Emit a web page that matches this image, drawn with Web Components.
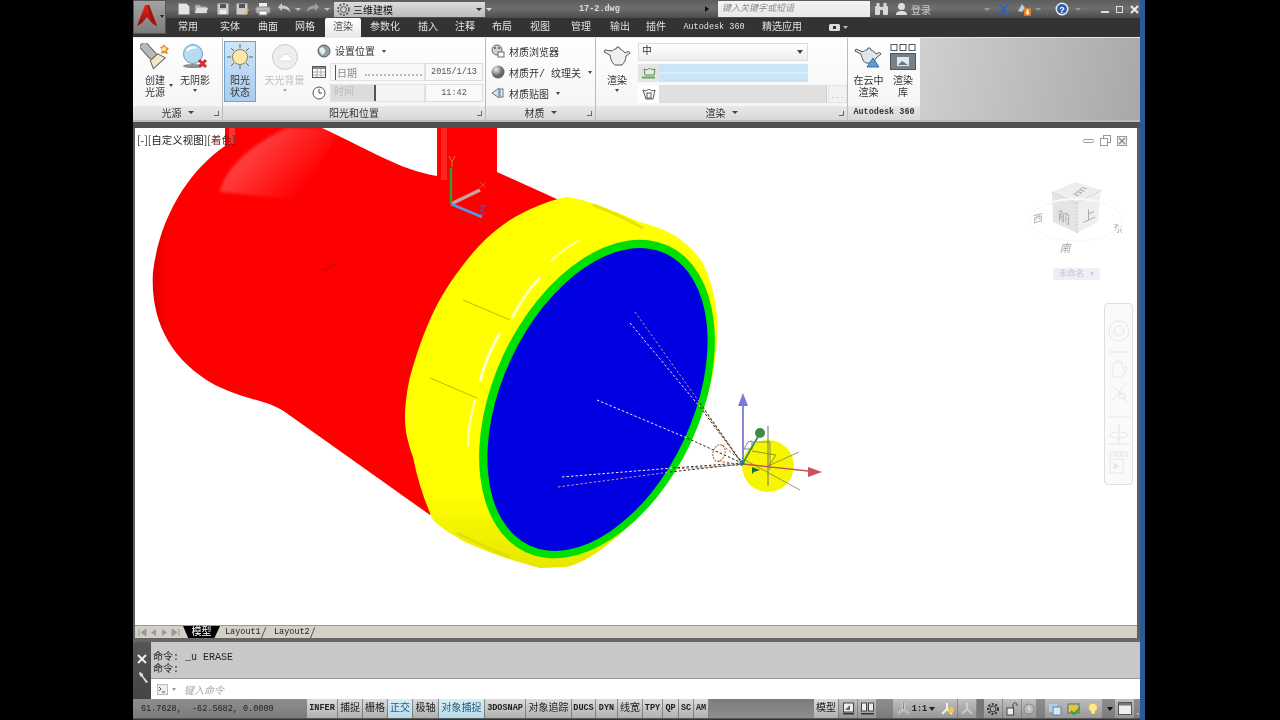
<!DOCTYPE html>
<html lang="zh">
<head>
<meta charset="utf-8">
<title>17-2.dwg</title>
<style>
  html, body { margin: 0; height: 100%; background: #000; overflow: hidden; }
  body { font: 10px "Liberation Mono", "Noto Sans CJK SC", monospace; padding-left: 133px; }
  svg { display: block; }
</style>
</head>
<body>

<cad-app>
  <cad-header slot="header"></cad-header>

  <ribbon-bar slot="ribbon">
    <ribbon-panel heading="光源" style="width:89px" menu>
      <ribbon-big style="width:40px;margin-left:2px" caret-side>
        <svg slot="icon" width="30" height="28" viewBox="0 0 30 28">
          <g transform="rotate(-42 12 12)"><rect x="8" y="-3" width="8" height="18" rx="2" fill="#b9b9b9" stroke="#666"/><path d="M7 15h10l3 8H4z" fill="#efe9c8" stroke="#666"/></g>
          <path d="M24 1l2 3 3 1-2 3 1 3-4-1-3 1 1-4-2-3 3-1z" fill="#e98a2c"/>
          <circle cx="24" cy="6" r="2" fill="#fff1b0"/>
        </svg>
        创建<br>光源
      </ribbon-big>
      <ribbon-big style="width:40px" caret>
        <svg slot="icon" width="30" height="28" viewBox="0 0 30 28">
          <circle cx="13" cy="11" r="9.5" fill="#b7dcf2" stroke="#6d9cc0"/>
          <path d="M7 8a7 6 0 0 1 9-3" stroke="#fff" stroke-width="2" fill="none"/>
          <ellipse cx="13" cy="23" rx="10" ry="2" fill="#8b8f96"/>
          <path d="M19 17l7 7m0-7l-7 7" stroke="#d62c2c" stroke-width="3"/>
        </svg>
        无阴影
      </ribbon-big>
    </ribbon-panel>

    <ribbon-panel heading="阳光和位置" style="width:262px;margin-left:1px">
      <ribbon-big active style="width:32px;margin-left:1px">
        <svg slot="icon" width="30" height="28" viewBox="0 0 30 28">
          <g stroke="#666" stroke-width="1"><path d="M15 1v4M15 22v4M2 14h4M24 14h4M6 5l3 3M24 5l-3 3M6 23l3-3M24 23l-3-3"/></g>
          <circle cx="15" cy="14" r="7.5" fill="#ffe9a6" stroke="#8a8060"/>
        </svg>
        阳光<br>状态
      </ribbon-big>
      <ribbon-big disabled caret style="width:45px;margin-left:6px">
        <svg slot="icon" width="30" height="28" viewBox="0 0 30 28">
          <circle cx="15" cy="14" r="12.5" fill="#eee" stroke="#ccc"/>
          <path d="M8 18c0-3 3-3 4-4 2-4 7-3 8 0 2 0 3 2 2 4z" fill="#fff" stroke="#ddd"/>
        </svg>
        天光背景
      </ribbon-big>
      <sun-controls style="margin-left:5px"></sun-controls>
    </ribbon-panel>

    <ribbon-panel heading="材质" style="width:109px;margin-left:1px" menu>
      <material-list></material-list>
    </ribbon-panel>

    <ribbon-panel heading="渲染" style="width:251px;margin-left:1px" menu>
      <ribbon-big style="width:38px;margin-left:2px" caret>
        <svg slot="icon" width="30" height="28" viewBox="0 0 30 28">
          <path d="M2 9l6 3c1 6 3 9 5 10h7c2-2 4-5 4-9l4-3c0-1-1-2-3-1l-2 1c-1-2-3-3-5-4l-1-2h-2l-1 2c-2 0-3 1-4 2L3 7z" fill="#eef0f0" stroke="#555"/>
        </svg>
        渲染
      </ribbon-big>
      <render-rows style="margin-left:2px"></render-rows>
    </ribbon-panel>

    <ribbon-panel heading="Autodesk 360" style="width:72px;margin-left:1px" noexpand>
      <ribbon-big style="width:37px;margin-left:2px">
        <svg slot="icon" width="30" height="28" viewBox="0 0 30 28">
          <path d="M1 8l6 3c1 5 3 8 5 9h7c1-1 2-3 3-5l5-4c0-1-2-2-3-1l-2 1c-1-2-3-3-5-4l-1-2h-2l-1 2c-2 0-3 1-4 2L2 6z" fill="#dfe6ea" stroke="#555"/>
          <path d="M19 15l6 9H13z" fill="#5b9bd8" stroke="#3a6f9f"/>
        </svg>
        在云中<br>渲染
      </ribbon-big>
      <ribbon-big style="width:32px">
        <svg slot="icon" width="28" height="28" viewBox="0 0 28 28">
          <g fill="#fff" stroke="#555"><rect x="2" y="1.500" width="6" height="6"/><rect x="11" y="1.500" width="6" height="6"/><rect x="20" y="1.500" width="6" height="6"/></g>
          <rect x="1.500" y="10.500" width="25" height="16" fill="#75828c" stroke="#555"/>
          <rect x="8" y="14" width="12" height="9" fill="#dfe8ec"/>
          <path d="M9 22l4-4 3 2 3 2z" fill="#69757f"/>
        </svg>
        渲染<br>库
      </ribbon-big>
    </ribbon-panel>
  </ribbon-bar>

  <model-view slot="view"></model-view>
  <layout-tabs slot="layouts"></layout-tabs>
  <command-line slot="command"></command-line>
  <status-bar slot="status"></status-bar>
</cad-app>

<template id="header-tpl">
  <style>
    :host { display: grid; grid-template-columns: 33px 1fr; grid-template-rows: 18px 19px; color: #eee; background: #333; }
    .logo { grid-row: 1 / 3; height: 34px; background: linear-gradient(#a4a4a4, #7c7c7c); border: 1px solid #555; box-sizing: border-box; display: flex; padding: 3px 0 0 2px; gap: 2px; }
    .logo i { width: 0; height: 0; border: 2.500px solid transparent; border-top: 3px solid #222; margin-top: 11px; }
    .title { display: flex; align-items: center; background: linear-gradient(#5c5c5c, #6e6e6e 45%, #4c4c4c); }
    .title > * { flex: none; }
    .combo { width: 151px; height: 15px; background: linear-gradient(#ddd, #bbb); color: #111; display: flex; align-items: center; box-sizing: border-box; padding-left: 2px; margin-left: 4px; }
    .combo b { font-weight: normal; margin-left: 2px; }
    .combo i { margin-left: auto; margin-right: 3px; border: 3px solid transparent; border-top: 3px solid #333; margin-top: 3px; }
    .tri { border: 3px solid transparent; border-top-color: #bbb; margin-top: 3px; width: 0; height: 0; }
    .name { font-weight: bold; font-size: 8.500px; color: #ddd; margin-left: 87px; width: 50px; }
    .search { width: 152px; height: 16px; background: linear-gradient(#f4f4f4, #e8e8e8); color: #8b8b8b; font-style: italic; font-size: 9px; line-height: 16px; padding-left: 4px; box-sizing: border-box; margin-left: 6px; }
    .tabs { background: #333; display: flex; align-items: stretch; margin-left: 0; }
    .tabs span { flex: none; text-align: center; line-height: 19px; color: #e0e0e0; font-size: 10px; box-sizing: border-box; }
    .tabs .on { background: linear-gradient(#fff, #e8e8e8); color: #555; height: 19px; width: 36px; margin: 0 1px; border-radius: 2px 2px 0 0; }
    .tabs .latin { font-size: 8.500px; }
  </style>
  <div class="logo">
    <svg width="22" height="24" viewBox="0 0 22 24"><defs><linearGradient id="lg" x1="0" y1="0" x2="0" y2="1"><stop offset="0" stop-color="#e8261a"/><stop offset="1" stop-color="#8e0f0a"/></linearGradient></defs><path d="M9 1h4l8 21-5-3-5-6-5 6-5 3z" fill="url(#lg)"/><path d="M11 1h2l8 21-5-3z" fill="#a81209"/></svg>
    <i></i>
  </div>
  <div class="title">
    <svg style="margin-left:11px" width="14" height="14" viewBox="0 0 14 14"><path d="M1.500 1.500h8l3 3v8h-11z" fill="#e4e4e4" stroke="#999"/></svg>
    <svg style="margin-left:3px" width="15" height="14" viewBox="0 0 15 14"><path d="M1 3h5l1 1.500h6V11H1z" fill="#bbb" stroke="#888"/><path d="M3 6h11l-2 5H1z" fill="#ddd"/></svg>
    <svg style="margin-left:7px" width="14" height="14" viewBox="0 0 14 14"><rect x="1.500" y="1.500" width="11" height="11" rx="1" fill="#ccc" stroke="#999"/><rect x="4" y="2" width="6" height="4" fill="#555"/><rect x="4" y="8" width="6" height="4" fill="#eee"/></svg>
    <svg style="margin-left:5px" width="15" height="14" viewBox="0 0 15 14"><rect x="1.500" y="1.500" width="11" height="11" rx="1" fill="#ccc" stroke="#999"/><rect x="4" y="2" width="6" height="4" fill="#555"/><path d="M8 12l5-5 1 1-5 5z" fill="#e6b93a"/></svg>
    <svg style="margin-left:5px" width="16" height="14" viewBox="0 0 16 14"><rect x="4" y="1" width="8" height="4" fill="#eee"/><rect x="1" y="5" width="14" height="6" rx="1" fill="#bbb" stroke="#888"/><rect x="4" y="9" width="8" height="4" fill="#fff" stroke="#888"/></svg>
    <svg style="margin-left:6px" width="14" height="14" viewBox="0 0 14 14"><path d="M1 5l4-4v2.500c5 0 8 2 8 7-1.500-3-4-4-8-4V9z" fill="#ccc"/></svg>
    <div class="tri" style="margin-left:4px"></div>
    <svg style="margin-left:5px;opacity:.55" width="14" height="14" viewBox="0 0 14 14"><path d="M13 5L9 1v2.500c-5 0-8 2-8 7 1.500-3 4-4 8-4V9z" fill="#ccc"/></svg>
    <div class="tri" style="margin-left:4px"></div>
    <div class="combo">
      <svg width="15" height="15" viewBox="0 0 15 15"><circle cx="7.500" cy="7.500" r="3" fill="none" stroke="#555"/><circle cx="7.500" cy="7.500" r="5.500" fill="none" stroke="#555" stroke-width="1.600" stroke-dasharray="2 1.500"/></svg>
      <b>三维建模</b><i></i>
    </div>
    <div class="tri" style="margin-left:1px;border-top-color:#ddd"></div>
    <div class="name">17-2.dwg</div>
    <div style="width:0;height:0;border:3px solid transparent;border-left:4px solid #111;margin-left:76px"></div>
    <div class="search">键入关键字或短语</div>
    <svg style="margin-left:4px" width="15" height="14" viewBox="0 0 15 14"><g fill="#d8d8d8"><rect x="1" y="4" width="5" height="9" rx="1"/><rect x="9" y="4" width="5" height="9" rx="1"/><rect x="2.500" y="1" width="3" height="4"/><rect x="9.500" y="1" width="3" height="4"/><rect x="6" y="5" width="3" height="3"/></g></svg>
    <svg style="margin-left:6px" width="13" height="14" viewBox="0 0 13 14"><circle cx="6.500" cy="4.500" r="3.500" fill="#ddd"/><path d="M1 13c0-3 2-4 5.500-4s5.500 1 5.500 4z" fill="#ddd"/></svg>
    <span style="margin-left:3px;color:#ccc">登录</span>
    <div class="tri" style="margin-left:53px;border-top-color:#999"></div>
    <svg style="margin-left:7px" width="13" height="13" viewBox="0 0 13 13"><path d="M1 1h3l2.500 3.500L9 1h3L8 6.500l4 5.500H9L6.500 8.500 4 12H1l4-5.500z" fill="#3a62a8"/></svg>
    <svg style="margin-left:7px" width="15" height="15" viewBox="0 0 15 15"><path d="M1 9l4-7 3 4-3 4z" fill="#b8cde2"/><rect x="7" y="6" width="7" height="8" rx="1" fill="#e07b1e"/><path d="M9.500 7.500h2v3H13l-2.500 2.500L8 10.500h1.500z" fill="#fff"/></svg>
    <div class="tri" style="margin-left:3px;border-top-color:#999"></div>
    <div style="width:1px;height:14px;background:#666;margin-left:6px"></div>
    <svg style="margin-left:7px" width="14" height="14" viewBox="0 0 14 14"><circle cx="7" cy="7" r="6.500" fill="#e8eef6"/><circle cx="7" cy="7" r="5" fill="#2d63ad"/><text x="7" y="10.500" text-anchor="middle" font-size="9" font-weight="bold" fill="#fff" font-family="Liberation Sans">?</text></svg>
    <div class="tri" style="margin-left:6px;border-top-color:#999"></div>
    <div style="width:8px;height:2px;background:#ddd;margin:6px 0 0 20px"></div>
    <div style="width:5px;height:5px;border:1px solid #ddd;margin-left:7px"></div>
    <svg style="margin-left:7px" width="9" height="9" viewBox="0 0 9 9"><path d="M1 1l7 7m0-7L1 8" stroke="#eee" stroke-width="2"/></svg>
  </div>
  <div class="tabs">
    <span style="width:44px;margin-left:0">常用</span><span style="width:40px">实体</span><span style="width:36px">曲面</span><span style="width:38px">网格</span>
    <span class="on">渲染</span><span style="width:46px">参数化</span><span style="width:40px">插入</span><span style="width:34px">注释</span>
    <span style="width:40px">布局</span><span style="width:36px">视图</span><span style="width:46px">管理</span><span style="width:32px">输出</span>
    <span style="width:40px">插件</span><span class="latin" style="width:76px">Autodesk 360</span><span style="width:60px">精选应用</span>
    <span style="width:52px;display:flex;align-items:center;justify-content:center;gap:3px">
      <svg width="11" height="7" viewBox="0 0 11 7"><rect width="11" height="7" rx="1.500" fill="#ddd"/><rect x="4" y="2" width="3" height="3" fill="#333"/></svg>
      <svg width="5" height="3" viewBox="0 0 5 3"><path d="M0 0h5L2.500 3z" fill="#bbb"/></svg>
    </span>
  </div>
</template>

<template id="panel-tpl">
  <style>
    :host { display: grid; grid-template-rows: 67px 15px; flex: none; box-sizing: border-box; background: linear-gradient(#fff, #f3f3f3); }
    .body { display: flex; align-items: flex-start; padding-top: 3px; box-sizing: border-box; min-width: 0; }
    .foot { display: flex; align-items: center; justify-content: center; gap: 6px; position: relative; background: linear-gradient(#e8e8e8, #d8d8d8); color: #333; font-size: 10px; border-top: 1px solid #f6f6f6; padding-bottom: 2px; box-sizing: border-box; }
    .foot i { border: 3px solid transparent; border-top: 3.500px solid #444; margin-top: 3px; }
    .expand { position: absolute; right: 3px; bottom: 4px; width: 4px; height: 4px; border-right: 1px solid #666; border-bottom: 1px solid #666; }
    .latin { font-size: 8.500px; font-weight: bold; }
  </style>
  <div class="body"><slot></slot></div>
  <div class="foot"><span id="h"></span><i id="m"></i><div class="expand" id="e"></div></div>
</template>

<template id="big-tpl">
  <style>
    :host { display: flex; flex-direction: column; align-items: center; flex: none; height: 61px; padding-top: 2px; box-sizing: border-box; color: #333; font-size: 10px; line-height: 12px; text-align: center; position: relative; }
    :host([active]) { background: linear-gradient(#cfe4f7, #a9cdee); border: 1px solid #6fa3d4; padding-top: 1px; }
    :host([disabled]) { color: #bdbdbd; }
    .icon { height: 33px; display: flex; align-items: flex-start; justify-content: center; }
    .car { width: 0; height: 0; border: 2.500px solid transparent; border-top: 3px solid #444; margin-top: 1px; display: none; }
    :host([caret]) .car { display: block; }
    :host([disabled]) .car { border-top-color: #aaa; }
    .side { position: absolute; right: 2px; top: 43px; width: 0; height: 0; border: 2.500px solid transparent; border-top: 3px solid #444; display: none; }
    :host([caret-side]) .side { display: block; }
  </style>
  <div class="icon"><slot name="icon"></slot></div>
  <div><slot></slot></div>
  <div class="car"></div><div class="side"></div>
</template>

<template id="sun-tpl">
  <style>
    :host { display: flex; flex-direction: column; gap: 3px; width: 171px; color: #333; font-size: 10px; flex: none; }
    .row { height: 18px; display: grid; grid-template-columns: 18px 95px 58px; align-items: stretch; }
    .first { height: 19px; display: flex; align-items: center; padding-left: 5px; gap: 4px; }
    .first i { width: 0; height: 0; border: 2.500px solid transparent; border-top: 3px solid #444; margin: 3px 0 0 3px; }
    .ic { display: flex; align-items: center; }
    .slider { background: #f8f8f8; border: 1px solid #e2e2e2; box-sizing: border-box; display: flex; align-items: center; color: #888; padding-left: 4px; }
    .slider.date b { font-weight: normal; border-left: 1px solid #555; padding-left: 1px; }
    .dots { flex: 1; margin: 5px 2px 0 8px; height: 1px; border-bottom: 2px dotted #bbb; }
    .slider.time { padding: 0; background: #f4f4f4; }
    .fill { width: 45px; height: 100%; background: #dcdcdc; color: #bbb; padding-left: 3px; box-sizing: border-box; line-height: 16px; border-right: 2px solid #555; }
    .val { background: #f9f9f9; border: 1px solid #ddd; box-sizing: border-box; text-align: center; font-size: 8.500px; line-height: 16px; color: #555; }
  </style>
  <div class="first">
    <svg width="14" height="14" viewBox="0 0 14 14"><circle cx="7" cy="7" r="6" fill="#8fa0a6" stroke="#556"/><path d="M3 4c3-2 4 0 5 2s-1 4-3 5c-1-2-1-2-2-3s-1-3 0-4z" fill="#e6ece8"/></svg>
    设置位置<i></i>
  </div>
  <div class="row">
    <div class="ic"><svg width="14" height="14" viewBox="0 0 14 14"><rect x=".5" y="1.500" width="13" height="11" fill="#fff" stroke="#555"/><rect x="1" y="2" width="12" height="2" fill="#888"/><path d="M1 7h12M1 10h12M5 4v8M9 4v8" stroke="#aaa"/></svg></div>
    <div class="slider date"><b>日期</b><div class="dots"></div></div>
    <div class="val">2015/1/13</div>
  </div>
  <div class="row">
    <div class="ic"><svg width="14" height="14" viewBox="0 0 14 14"><circle cx="7" cy="7" r="6" fill="#fff" stroke="#555"/><path d="M7 3v4h3" stroke="#444" fill="none"/></svg></div>
    <div class="slider time"><div class="fill">时间</div></div>
    <div class="val">11:42</div>
  </div>
</template>

<template id="mat-tpl">
  <style>
    :host { display: flex; flex-direction: column; gap: 1px; padding-left: 5px; color: #333; font-size: 10px; flex: none; }
    div { height: 20px; display: flex; align-items: center; gap: 4px; white-space: nowrap; }
    i { width: 0; height: 0; border: 2.500px solid transparent; border-top: 3px solid #444; margin: 3px 0 0 3px; }
  </style>
  <div><svg width="14" height="14" viewBox="0 0 14 14"><circle cx="6" cy="6" r="5" fill="#cfd3d6" stroke="#667"/><circle cx="4" cy="4" r="1" fill="#555"/><circle cx="8" cy="4" r="1" fill="#555"/><rect x="7" y="8" width="6" height="5" fill="#fff" stroke="#667"/></svg>材质浏览器</div>
  <div><svg width="14" height="14" viewBox="0 0 14 14"><defs><radialGradient id="mb" cx=".35" cy=".3"><stop offset="0" stop-color="#eee"/><stop offset="1" stop-color="#666"/></radialGradient></defs><circle cx="7" cy="7" r="6.500" fill="url(#mb)"/></svg>材质开/ 纹理关<i></i></div>
  <div><svg width="14" height="14" viewBox="0 0 14 14"><path d="M1 7l7-5v10z" fill="#cfe0ef" stroke="#5a7d9c"/><rect x="9" y="3" width="3" height="8" fill="#e8e8e8" stroke="#777"/></svg>材质贴图<i></i></div>
</template>

<template id="rows-tpl">
  <style>
    :host { display: flex; flex-direction: column; gap: 3px; padding-top: 2px; width: 210px; flex: none; font-size: 10px; color: #333; }
    .r { height: 18px; display: flex; align-items: stretch; box-sizing: border-box; }
    .c { width: 170px; background: linear-gradient(#fff, #eee); border: 1px solid #ddd; box-sizing: border-box; line-height: 16px; padding-left: 3px; display: flex; align-items: center; justify-content: space-between; }
    .c i { border: 3px solid transparent; border-top: 4px solid #444; margin: 3px 4px 0 0; }
    .ic { width: 21px; background: #e4e4e4; display: flex; align-items: center; justify-content: center; flex: none; }
    .blue { width: 149px; background: linear-gradient(#c8e6f8 45%, #eaf6fc 50%, #c8e6f8 55%); }
    .grey { width: 168px; background: #e0e0e0; border-right: 1px solid #ccc; box-sizing: border-box; }
    .dots { width: 19px; margin-left: 1px; background: #f2f2f2; color: #aaa; text-align: center; line-height: 20px; font-size: 8px; border: 1px solid #e4e4e4; box-sizing: border-box; }
  </style>
  <div class="r"><div class="c">中<i></i></div></div>
  <div class="r"><div class="ic"><svg width="15" height="14" viewBox="0 0 15 14"><path d="M3 3l3 1c2-2 4-2 5 0l3-1-1 6H4z" fill="#e4efe2" stroke="#586"/><rect x="1" y="10.500" width="13" height="2" fill="#6aa84f"/></svg></div><div class="blue"></div></div>
  <div class="r"><div class="ic" style="background:#fff"><svg width="15" height="14" viewBox="0 0 15 14"><path d="M2 3l3 1c2-2 4-2 6 0l3-1-2 9H5z" fill="#fff" stroke="#555"/><rect x="6" y="6" width="4" height="5" fill="none" stroke="#555"/></svg></div><div class="grey"></div><div class="dots">...</div></div>
</template>

<template id="view-tpl">
  <style>
    :host { display: block; height: 497px; background: #fff; position: relative; overflow: hidden; }
    svg { display: block; }
    .label { position: absolute; left: 2px; top: 6px; font: 10.500px/12px "Noto Sans CJK SC", sans-serif; color: #222; }
    .label em { font-style: normal; color: #702020; }
    .wctl { position: absolute; left: 948px; top: 7px; display: flex; gap: 6px; align-items: center; opacity: .75; }
    .name { position: absolute; left: 918px; top: 140px; width: 47px; height: 12px; background: #eeeef6; color: #c4c4ce; border-radius: 3px; font-size: 8.500px; line-height: 12px; text-align: center; }
    .nav { position: absolute; left: 969px; top: 175px; width: 29px; height: 182px; border: 1px solid #dfdfdf; border-radius: 4px; box-sizing: border-box; background: #fafafa; }
  </style>
  <svg width="1002" height="497" viewBox="135 128 1002 497">
    <defs>
      <linearGradient id="red" x1="0" y1="0" x2="1" y2="0"><stop offset="0" stop-color="#e00000"/><stop offset=".04" stop-color="#ff0000"/></linearGradient>
      <linearGradient id="gloss" gradientUnits="userSpaceOnUse" x1="235" y1="145" x2="295" y2="200"><stop offset="0" stop-color="#fff" stop-opacity=".3"/><stop offset="1" stop-color="#fff" stop-opacity="0"/></linearGradient>
      <linearGradient id="flange" x1="0" y1="0" x2="0" y2="1"><stop offset=".8" stop-color="#ffff00"/><stop offset="1" stop-color="#e6e600"/></linearGradient>
      <filter id="soft" x="-20%" y="-20%" width="140%" height="140%"><feGaussianBlur stdDeviation="1.500"/></filter>
    </defs>
    <path d="M240 128 L225 128 L225 146 C190 170 160 215 153 272 C150 320 170 360 215 385 C245 400 268 400 285 412 L430 515 L570 205 L497 172 L497 128 L437 128 L437 176 C400 170 370 150 322 128 Z" fill="url(#red)"/>
    <path d="M220 192C224 170 250 145 287 128L340 128L300 200Z" fill="url(#gloss)" filter="url(#soft)"/>
    <rect x="229" y="128" width="6" height="16" fill="#fff" opacity=".2"/>
    <rect x="441" y="128" width="6" height="52" fill="#fff" opacity=".14"/>
    <path d="M323 270c4 0 9-3 12-6-3 3-7 6-12 6z" stroke="#a01818" stroke-width="1" fill="none"/>
    <g fill="none">
      <path d="M451 204L480 190" stroke="#c9a0a0" stroke-width="3.500"/>
      <path d="M451 204V168" stroke="#2f9a3f" stroke-width="2.500"/>
      <path d="M451 204L482 217" stroke="#4f9be8" stroke-width="2.500"/>
      <path d="M449 156l3 6 3-6M452 162v5" stroke="#d08030" stroke-width="1"/>
      <path d="M480 188l6-6m0 6l-6-6" stroke="#cc6633" stroke-width=".7"/>
      <path d="M480 206h5l-5 5h5M480 214h5" stroke="#5a5ad0" stroke-width=".8"/>
    </g>
    <path d="M567 197 C590 200 620 214 643 223 C660 228 670 232 677 237 C695 250 704 262 707 273 C716 295 718 315 717 333 C717 355 713 378 707 397 C695 425 682 455 667 477 C650 505 632 525 613 540 C597 554 582 563 567 567 L540 568 C515 562 490 553 467 543 C455 536 443 530 433 520 C424 500 417 478 413 457 C407 440 405 430 405 417 C405 405 407 390 410 377 C416 355 424 332 433 313 C443 292 455 275 467 260 C480 243 495 230 510 220 C525 211 545 201 567 197 Z" fill="url(#flange)"/>
    <g fill="none">
      <path d="M593 205C610 211 630 221 643 228" stroke="#e6e600" stroke-width="3"/>
      <path d="M457 533C475 542 495 551 510 557" stroke="#e0e000" stroke-width="3"/>
      <path d="M463 300L510 320M430 378L477 398" stroke="#a8a800" stroke-width=".8"/>
      <path d="M512 318C520 302 530 288 540 278" stroke="#ffffb8" stroke-width="3"/>
      <path d="M480 382C484 364 492 346 500 333" stroke="#ffffc8" stroke-width="3"/>
      <path d="M468 447C468 430 471 414 475 400" stroke="#ffffa0" stroke-width="2.500"/>
      <path d="M550 262C560 252 570 245 580 240" stroke="#ffff90" stroke-width="2"/>
    </g>
    <ellipse cx="597" cy="399" rx="103.500" ry="169" transform="rotate(25 597 399)" fill="#00e000"/>
    <ellipse cx="597.500" cy="399.500" rx="95.500" ry="161" transform="rotate(25 597.500 399.500)" fill="#0000e0"/>
    <g fill="none" stroke-width="1" stroke-dasharray="2.500 2">
      <path d="M635 312L700 403" stroke="#c89090"/><path d="M630 323L700 407" stroke="#e8e8ff"/>
      <path d="M597 400L687 438" stroke="#f0f0ff"/><path d="M562 477L673 468" stroke="#f0f0ff"/><path d="M558 487L670 472" stroke="#d090b0"/>
      <path d="M700 403L742 463M700 407L742 463M687 438L742 463M673 468L742 463M670 472L742 464" stroke="#222"/>
      <path d="M700 404L742 464M673 469L742 465" stroke="#a86a30"/>
      <ellipse cx="719" cy="453" rx="6" ry="8.500" transform="rotate(15 719 453)" stroke="#a8602c" stroke-dasharray="2 1"/>
      <path d="M722 445L742 461M718 461L742 465" stroke="#a8602c"/>
    </g>
    <circle cx="768" cy="466" r="26" fill="#f6f600"/>
    <path d="M768 426V486" stroke="#707070"/>
    <path d="M745 460L800 490M768 466L799 452" stroke="#808060" stroke-width=".8"/>
    <path d="M752 442h18l0 28M752 451l24 4-8 12" fill="none" stroke="#7e8c38" stroke-width=".9"/>
    <path d="M748 442l-4 7h8v-8z" fill="none" stroke="#7a7ad8"/>
    <path d="M743 463V404" stroke="#6a6ad0" stroke-width="1.600"/>
    <path d="M743 393l5 13h-10z" fill="#7878dc"/>
    <path d="M743 463L760 433" stroke="#2f8f3f" stroke-width="1.600"/>
    <circle cx="760" cy="433" r="5" fill="#3c8c48"/>
    <path d="M743 464L808 471" stroke="#c85050" stroke-width="1.400"/>
    <path d="M822 472l-14 5v-10z" fill="#c85058"/>
    <path d="M752 467l8 3-6 2-2 2z" fill="#1e6e2a"/>
    <circle cx="742" cy="463" r="2.500" fill="#2c7a8c"/>
    <path d="M1052 192L1077 203L1101 190L1075 182Z" fill="#eeeeee"/>
    <path d="M1052 192L1077 203V233L1053 222Z" fill="#e4e4e4"/>
    <path d="M1077 203L1101 190L1098 222L1077 233Z" fill="#efefef"/>
    <path d="M1052 192L1077 203L1101 190M1077 203V233" fill="none" stroke="#c4c4c4" stroke-dasharray="2 1.500"/>
    <g fill="#a8a8a8" text-anchor="middle" font-family="Noto Sans CJK SC, sans-serif">
      <text font-size="9" transform="translate(1076 195) skewX(-50) skewY(15)">后</text>
      <text font-size="13" transform="translate(1064 222) skewY(25)">前</text>
      <text font-size="13" transform="translate(1089 220) skewY(-25)">上</text>
      <text font-size="10" transform="translate(1038 222) skewY(-15)">西</text>
      <text font-size="10" transform="translate(1118 232) skewY(15)">东</text>
      <text font-size="11" transform="translate(1065 252) skewX(-15)">南</text>
    </g>
    <ellipse cx="1076" cy="220" rx="46" ry="21" fill="none" stroke="#fafafa" stroke-width="2"/>
  </svg>
  <div class="label">[-][自定义视图][<em>着色</em>]</div>
  <div class="wctl">
    <svg width="11" height="6" viewBox="0 0 11 6"><rect x=".5" y="1.500" width="10" height="3" rx="1" fill="#fff" stroke="#777"/></svg>
    <svg width="11" height="11" viewBox="0 0 11 11"><rect x="3.500" y=".5" width="7" height="7" fill="#fff" stroke="#777"/><rect x=".5" y="3.500" width="7" height="7" fill="#fff" stroke="#777"/></svg>
    <svg width="10" height="10" viewBox="0 0 10 10"><rect x=".5" y=".5" width="9" height="9" fill="#eee" stroke="#777"/><path d="M2 2l6 6m0-6L2 8" stroke="#666" stroke-width="1.500"/></svg>
  </div>
  <div class="name">未命名 ▾</div>
  <div class="nav">
    <svg width="27" height="180" viewBox="0 0 27 180" fill="none" stroke="#e6e6e6">
      <circle cx="14" cy="27" r="10"/><circle cx="14" cy="27" r="5"/><path d="M3 48h22M3 113h22M3 140h22"/>
      <path d="M8 72V60c2-3 3 0 3 0v-3c2-2 3 0 3 0v2c2-2 3 0 3 2l1 4 3-3c2 1 0 4 0 4l-4 7H10z"/>
      <path d="M5 79l12 13M21 79L7 97M18 93l5 5" /><circle cx="17" cy="92" r="3"/>
      <path d="M14 112v-22" transform="translate(0 30)"/><ellipse cx="14" cy="131" rx="9" ry="3"/>
      <rect x="5" y="148" width="5" height="4"/><rect x="11" y="148" width="5" height="4"/><rect x="17" y="148" width="5" height="4"/>
      <rect x="5" y="155" width="13" height="14"/><path d="M9 159l5 3-5 3z" fill="#e6e6e6"/>
    </svg>
  </div>
</template>

<template id="layout-tpl">
  <style>
    :host { display: flex; height: 13px; background: #d4d0c8; align-items: stretch; font-size: 8.500px; color: #222; line-height: 13px; border-top: 1px solid #999; box-sizing: border-box; }
    .nav { width: 47px; padding-left: 3px; display: flex; align-items: center; gap: 2px; box-sizing: border-box; flex: none; }
    .nav svg { flex: none; }
    .active { width: 37px; background: #000; color: #fff; text-align: center; clip-path: polygon(0 0, 100% 0, 85% 100%, 14% 100%); font-size: 10px; flex: none; }
    .t { padding: 0 0 0 5px; width: 49px; box-sizing: border-box; flex: none; border-right: 0; position: relative; }
    .t::after { content: ""; position: absolute; right: 5px; top: 1px; width: 1px; height: 12px; background: #555; transform: rotate(22deg); }
  </style>
  <div class="nav">
    <svg width="9" height="9" viewBox="0 0 9 9"><path d="M1 1v7M8 1L3 4.500 8 8z" fill="#999" stroke="#999"/></svg>
    <svg width="9" height="9" viewBox="0 0 9 9"><path d="M7 1L2 4.500 7 8z" fill="#999"/></svg>
    <svg width="9" height="9" viewBox="0 0 9 9"><path d="M2 1l5 3.500L2 8z" fill="#999"/></svg>
    <svg width="9" height="9" viewBox="0 0 9 9"><path d="M8 1v7M1 1l5 3.500L1 8z" fill="#999" stroke="#999"/></svg>
  </div>
  <div class="active" style="margin-left:1px">模型</div>
  <div class="t">Layout1</div>
  <div class="t">Layout2</div>
</template>

<template id="command-tpl">
  <style>
    :host { display: grid; grid-template-columns: 18px 1fr; height: 57px; background: #555; }
    .side { background: linear-gradient(#555, #444); display: flex; flex-direction: column; align-items: center; color: #eee; padding-top: 12px; gap: 8px; }
    .main { display: grid; grid-template-rows: 37px 20px; }
    .hist { background: #c8c8c8; padding: 10px 0 0 2px; font-size: 10px; line-height: 12px; color: #222; border-bottom: 1px solid #999; box-sizing: border-box; white-space: pre; }
    .input { background: #fff; display: flex; align-items: center; padding-left: 6px; color: #aaa; font-size: 10px; }
    .input em { margin-left: 16px; }
    .input i { border: 2.500px solid transparent; border-top: 3px solid #999; margin: 3px 0 0 4px; }
  </style>
  <div class="side">
    <svg width="10" height="10" viewBox="0 0 10 10"><path d="M1 1l8 8m0-8L1 9" stroke="#eee" stroke-width="2"/></svg>
    <svg width="13" height="13" viewBox="0 0 13 13"><path d="M3 1l1 3 2 1 4 6 2-1-5-6V2L4 0z" fill="#ddd"/></svg>
  </div>
  <div class="main">
    <div class="hist">命令: _u ERASE
命令:</div>
    <div class="input">
      <svg width="11" height="11" viewBox="0 0 11 11"><rect x=".5" y=".5" width="10" height="10" fill="#eee" stroke="#bbb"/><path d="M2 3l2 2-2 2M5 8h3" stroke="#555" fill="none"/></svg>
      <i></i><em style="margin-left:8px">键入命令</em>
    </div>
  </div>
</template>

<template id="toggle-tpl">
  <style>
    :host { display: block; flex: none; height: 19px; margin-right: 1px; background: linear-gradient(#dcdcdc, #b0b0b0); color: #222; text-align: center; line-height: 19px; font-size: 10px; box-sizing: border-box; }
    :host([on]) { background: linear-gradient(#d6edf6, #b7dce9); color: #2a5b78; }
    :host([latin]) { font-size: 8.500px; font-weight: bold; }
  </style>
  <slot></slot>
</template>

<template id="status-tpl">
  <style>
    :host { display: flex; align-items: flex-start; height: 21px; background: linear-gradient(#8e8e8e, #7c7c7c 88%, #222); box-sizing: border-box; color: #222; font-size: 8.500px; }
    .coords { width: 174px; padding-left: 8px; box-sizing: border-box; line-height: 20px; color: #222; flex: none; white-space: pre; }
    .gap { width: 105px; height: 19px; flex: none; background: linear-gradient(#7c7c7c, #8e8e8e); }
    .ic { flex: none; width: 18px; height: 19px; display: flex; align-items: center; justify-content: center; background: linear-gradient(#c0c0c0, #969696); margin-right: 1px; }
    .scale { display: flex; align-items: center; gap: 2px; width: 46px; height: 19px; justify-content: center; background: linear-gradient(#c0c0c0, #969696); flex: none; font-weight: bold; margin-left: 16px; }
    .tray { width: 57px; height: 19px; flex: none; background: linear-gradient(#bcbcbc, #999); display: flex; align-items: center; justify-content: space-around; margin-left: 8px; }
  </style>
  <div class="coords">61.7628,  -62.5682, 0.0000</div>
  <status-toggle latin style="width:30px">INFER</status-toggle>
  <status-toggle style="width:24px">捕捉</status-toggle>
  <status-toggle style="width:24px">栅格</status-toggle>
  <status-toggle on style="width:24px">正交</status-toggle>
  <status-toggle style="width:25px">极轴</status-toggle>
  <status-toggle on style="width:45px">对象捕捉</status-toggle>
  <status-toggle latin style="width:40px">3DOSNAP</status-toggle>
  <status-toggle style="width:45px">对象追踪</status-toggle>
  <status-toggle latin style="width:23px">DUCS</status-toggle>
  <status-toggle latin style="width:21px">DYN</status-toggle>
  <status-toggle style="width:24px">线宽</status-toggle>
  <status-toggle latin style="width:19px">TPY</status-toggle>
  <status-toggle latin style="width:15px">QP</status-toggle>
  <status-toggle latin style="width:14px">SC</status-toggle>
  <status-toggle latin style="width:14px">AM</status-toggle>
  <div class="gap"></div>
  <status-toggle style="width:24px">模型</status-toggle>
  <div class="ic"><svg width="13" height="13" viewBox="0 0 13 13"><rect x="1.500" y="1" width="10" height="9" fill="#eee" stroke="#444"/><path d="M3 8l5-5v5z" fill="#666"/><rect x="1" y="11" width="11" height="1.500" fill="#333"/></svg></div>
  <div class="ic"><svg width="15" height="13" viewBox="0 0 15 13"><rect x="1.500" y="1" width="5" height="8" fill="#eee" stroke="#444"/><rect x="8.500" y="1" width="5" height="8" fill="#eee" stroke="#444"/><rect x="1" y="11" width="13" height="1.500" fill="#333"/></svg></div>
  <div class="scale">
    <svg width="13" height="14" viewBox="0 0 13 14"><path d="M6.500 1v6L1 12M6.500 7l5.500 5" stroke="#eee" stroke-width="2" fill="none"/><path d="M6.500 1v6L1 12M6.500 7l5.500 5" stroke="#555" stroke-width=".7" fill="none"/></svg>
    1:1 <svg width="6" height="4" viewBox="0 0 6 4"><path d="M0 0h6L3 4z" fill="#222"/></svg>
  </div>
  <div class="ic"><svg width="15" height="14" viewBox="0 0 15 14"><path d="M6 1v6L1 12M6 7l5 5" stroke="#eee" stroke-width="2" fill="none"/><circle cx="10" cy="8" r="3" fill="#f2c73c"/></svg></div>
  <div class="ic"><svg width="15" height="14" viewBox="0 0 15 14" opacity=".5"><path d="M7 1v6L2 12M7 7l5 5" stroke="#eee" stroke-width="2" fill="none"/></svg></div>
  <div style="width:7px;height:19px;flex:none;background:#777"></div>
  <div class="ic"><svg width="14" height="14" viewBox="0 0 14 14"><circle cx="7" cy="7" r="3" fill="none" stroke="#333"/><circle cx="7" cy="7" r="5" fill="none" stroke="#333" stroke-width="2" stroke-dasharray="2 1.600"/></svg></div>
  <div class="ic"><svg width="14" height="14" viewBox="0 0 14 14"><rect x="2" y="6" width="6.500" height="7" fill="#eee" stroke="#444"/><path d="M8 6V3c0-3 4-3 4 0v1" fill="none" stroke="#444"/></svg></div>
  <div class="ic" style="width:14px"><svg width="12" height="12" viewBox="0 0 12 12"><circle cx="6" cy="6" r="5" fill="#bbb" stroke="#888"/><path d="M6 3v3l2 1" stroke="#eee" fill="none"/></svg></div>
  <div class="tray">
    <svg width="14" height="14" viewBox="0 0 14 14"><rect x="1" y="2" width="8" height="8" fill="#b7d6ea" opacity=".8"/><rect x="5" y="5" width="8" height="8" fill="#d8e8f2" stroke="#5a88a8"/></svg>
    <svg width="14" height="14" viewBox="0 0 14 14"><rect x="1" y="2" width="11" height="9" fill="#e8c33c" stroke="#486ea0"/><path d="M4 9l3 3 6-6" stroke="#3da33d" stroke-width="2" fill="none"/></svg>
    <svg width="12" height="14" viewBox="0 0 12 14"><path d="M6 1a4.500 4.500 0 0 1 2 8.500V12H4V9.500A4.500 4.500 0 0 1 6 1z" fill="#ffe98a" stroke="#b8a450" stroke-width=".6"/></svg>
  </div>
  <svg style="margin:8px 0 0 5px;flex:none" width="6" height="4" viewBox="0 0 6 4"><path d="M0 0h6L3 4z" fill="#111"/></svg>
  <div class="ic" style="margin-left:2px;width:19px"><svg width="14" height="13" viewBox="0 0 14 13"><rect x=".5" y=".5" width="13" height="12" fill="#eee" stroke="#555"/><rect x="1" y="1" width="12" height="2.500" fill="#777"/></svg></div>
  <svg style="margin:8px 0 0 2px;flex:none" width="9" height="9" viewBox="0 0 9 9"><g fill="#ddd"><rect x="6" y="0" width="1.500" height="1.500"/><rect x="3" y="3" width="1.500" height="1.500"/><rect x="6" y="3" width="1.500" height="1.500"/><rect x="0" y="6" width="1.500" height="1.500"/><rect x="3" y="6" width="1.500" height="1.500"/><rect x="6" y="6" width="1.500" height="1.500"/></g></svg>
</template>

<template id="app-tpl">
  <style>
    :host { display: flex; width: 1012px; height: 720px; filter: blur(.35px); }
    .win { width: 1007px; display: flex; flex-direction: column; background: #5f5f5f; flex: none; }
    .strip { height: 6px; background: #4f4f4f; flex: none; }
    .mid { margin: 0 3px 0 2px; }
    .gap { height: 4px; background: #666; flex: none; }
    .edge { width: 5px; background: #2d5a96; flex: none; }
  </style>
  <div class="win">
    <slot name="header"></slot>
    <slot name="ribbon"></slot>
    <div class="strip"></div>
    <div class="mid"><slot name="view"></slot></div>
    <div class="mid"><slot name="layouts"></slot></div>
    <div class="gap"></div>
    <slot name="command"></slot>
    <slot name="status"></slot>
  </div>
  <div class="edge"></div>
</template>

<template id="ribbon-tpl">
  <style>
    :host { display: flex; height: 85px; background: #bbb; border-top: 1px solid #e8e8e8; padding-bottom: 2px; box-sizing: border-box; }
    .fill { flex: 1; background: linear-gradient(100deg, #d0d0d0, #a8a8a8); }
  </style>
  <slot></slot>
  <div class="fill"></div>
</template>

<script>
  // every element just clones its template into an open shadow root
  function simple(tag, tplId) {
    customElements.define(tag, class extends HTMLElement {
      constructor() {
        super();
        this.attachShadow({ mode: 'open' }).appendChild(document.getElementById(tplId).content.cloneNode(true));
      }
    });
  }

  class RibbonPanel extends HTMLElement {
    constructor() {
      super();
      this.attachShadow({ mode: 'open' }).appendChild(document.getElementById('panel-tpl').content.cloneNode(true));
    }

    connectedCallback() {
      const h = this.shadowRoot.querySelector('#h');
      h.textContent = this.getAttribute('heading');
      if (!this.hasAttribute('menu')) this.shadowRoot.querySelector('#m').remove();
      if (this.hasAttribute('noexpand')) {
        this.shadowRoot.querySelector('#e').remove();
        h.className = 'latin';
      }
    }
  }

  simple('status-toggle', 'toggle-tpl');
  simple('cad-app', 'app-tpl');
  simple('cad-header', 'header-tpl');
  simple('ribbon-bar', 'ribbon-tpl');
  simple('ribbon-big', 'big-tpl');
  simple('sun-controls', 'sun-tpl');
  simple('material-list', 'mat-tpl');
  simple('render-rows', 'rows-tpl');
  simple('model-view', 'view-tpl');
  simple('layout-tabs', 'layout-tpl');
  simple('command-line', 'command-tpl');
  simple('status-bar', 'status-tpl');
  customElements.define('ribbon-panel', RibbonPanel);
</script>
</body>
</html>
